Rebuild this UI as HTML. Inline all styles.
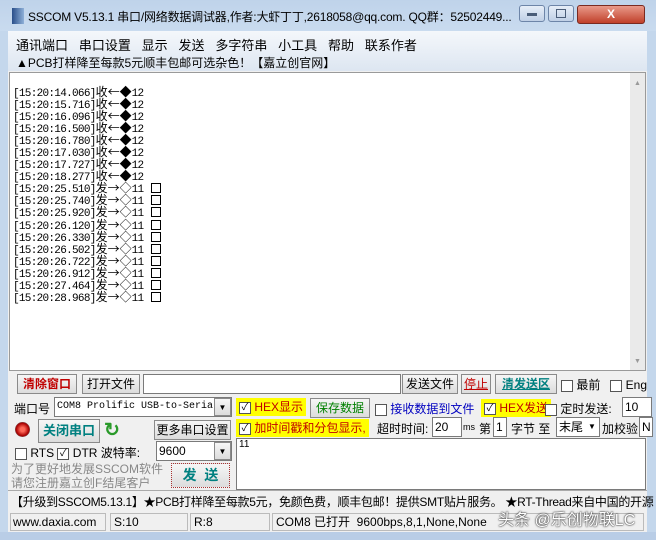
<!DOCTYPE html>
<html><head><meta charset="utf-8"><style>
*{margin:0;padding:0;box-sizing:border-box}
body{width:656px;height:540px;overflow:hidden;background:#c4d7ec;font-family:"Liberation Sans","Noto Sans CJK SC",sans-serif;font-size:12px;color:#000;position:relative}
.a{position:absolute;white-space:nowrap}
.btn{position:absolute;background:linear-gradient(#f6f6f6,#dcdcdc);border:1px solid #8a8a8a;text-align:center;line-height:18px;font-size:12px}
.cb{display:inline-block;width:12px;height:12px;border:1px solid #555;background:#fff;vertical-align:middle;font-size:10px;line-height:10px;text-align:center}
.inp{position:absolute;background:#fff;border:1px solid #7a7a7a;font-size:12px;line-height:18px;padding-left:2px}
.mono{font-family:"Liberation Mono","Noto Sans CJK SC",monospace}
.log div{height:12.05px;line-height:12px;overflow:visible;letter-spacing:-0.7px}
.w{display:inline-block;width:12px;line-height:12px;text-align:center;font-size:12px;letter-spacing:0;font-family:"Noto Sans CJK SC",sans-serif}
.s{display:inline-block;width:10px;height:10px;border:1px solid #000;margin-left:8px;vertical-align:-1px}
</style></head><body>
<div class="a" style="left:0;top:0;width:656px;height:31px;background:linear-gradient(#bfd3ea,#c9dbef)"></div>
<div class="a" style="left:12px;top:8px;width:12px;height:16px;background:linear-gradient(90deg,#2a4f8a,#8fb0d8)"></div>
<div class="a" style="left:28px;top:8px;font-size:12px;letter-spacing:-0.2px;color:#000">SSCOM V5.13.1 串口/网络数据调试器,作者:大虾丁丁,2618058@qq.com. QQ群：52502449...</div>
<div class="a" style="left:519px;top:5px;width:26px;height:17px;border:1px solid #6d85a8;border-radius:3px;background:linear-gradient(#e6eef8,#c0d0e6)"></div>
<div class="a" style="left:548px;top:5px;width:26px;height:17px;border:1px solid #6d85a8;border-radius:3px;background:linear-gradient(#e6eef8,#c0d0e6)"></div>
<div class="a" style="left:577px;top:5px;width:68px;height:19px;border:1px solid #7a2a20;border-radius:3px;background:linear-gradient(#e99a8a,#c0402a);color:#fff;font-weight:bold;text-align:center;line-height:17px">X</div>
<div class="a" style="left:527px;top:13px;width:10px;height:3px;background:#4a5d78"></div>
<div class="a" style="left:556px;top:9px;width:10px;height:9px;border:1px solid #4a5d78"></div>
<div class="a" style="left:8px;top:31px;width:639px;height:500px;background:#f0f0f0"></div>
<div class="a" style="left:8px;top:31px;width:639px;height:40px;background:linear-gradient(#f4f7fb,#dde6f1)"></div>
<div class="a" style="left:16px;top:35px;font-size:13px">通讯端口&nbsp;&nbsp;&nbsp;串口设置&nbsp;&nbsp;&nbsp;显示&nbsp;&nbsp;&nbsp;发送&nbsp;&nbsp;&nbsp;多字符串&nbsp;&nbsp;&nbsp;小工具&nbsp;&nbsp;&nbsp;帮助&nbsp;&nbsp;&nbsp;联系作者</div>
<div class="a" style="left:16px;top:54px;font-size:12px">▲PCB打样降至每款5元顺丰包邮可选杂色！【嘉立创官网】</div>
<div class="a" style="left:9px;top:72px;width:637px;height:299px;background:#fff;border:1px solid #9a9a9a"></div>
<div class="a" style="left:630px;top:73px;width:15px;height:297px;background:#eaeaea"></div>
<div class="a" style="left:634px;top:80px;font-size:7px;color:#999">▲</div>
<div class="a" style="left:634px;top:358px;font-size:7px;color:#999">▼</div>
<div class="a mono log" style="left:13px;top:86px;font-size:11px">
<div>[15:20:14.066]<span class="w">收</span><span class="w">←</span><span class="w">◆</span>12</div>
<div>[15:20:15.716]<span class="w">收</span><span class="w">←</span><span class="w">◆</span>12</div>
<div>[15:20:16.096]<span class="w">收</span><span class="w">←</span><span class="w">◆</span>12</div>
<div>[15:20:16.500]<span class="w">收</span><span class="w">←</span><span class="w">◆</span>12</div>
<div>[15:20:16.780]<span class="w">收</span><span class="w">←</span><span class="w">◆</span>12</div>
<div>[15:20:17.030]<span class="w">收</span><span class="w">←</span><span class="w">◆</span>12</div>
<div>[15:20:17.727]<span class="w">收</span><span class="w">←</span><span class="w">◆</span>12</div>
<div>[15:20:18.277]<span class="w">收</span><span class="w">←</span><span class="w">◆</span>12</div>
<div>[15:20:25.510]<span class="w">发</span><span class="w">→</span><span class="w">◇</span>11<span class="s"></span></div>
<div>[15:20:25.740]<span class="w">发</span><span class="w">→</span><span class="w">◇</span>11<span class="s"></span></div>
<div>[15:20:25.920]<span class="w">发</span><span class="w">→</span><span class="w">◇</span>11<span class="s"></span></div>
<div>[15:20:26.120]<span class="w">发</span><span class="w">→</span><span class="w">◇</span>11<span class="s"></span></div>
<div>[15:20:26.330]<span class="w">发</span><span class="w">→</span><span class="w">◇</span>11<span class="s"></span></div>
<div>[15:20:26.502]<span class="w">发</span><span class="w">→</span><span class="w">◇</span>11<span class="s"></span></div>
<div>[15:20:26.722]<span class="w">发</span><span class="w">→</span><span class="w">◇</span>11<span class="s"></span></div>
<div>[15:20:26.912]<span class="w">发</span><span class="w">→</span><span class="w">◇</span>11<span class="s"></span></div>
<div>[15:20:27.464]<span class="w">发</span><span class="w">→</span><span class="w">◇</span>11<span class="s"></span></div>
<div>[15:20:28.968]<span class="w">发</span><span class="w">→</span><span class="w">◇</span>11<span class="s"></span></div>
</div>
<div class="btn" style="left:17px;top:374px;width:60px;height:20px;color:#c00000;font-weight:bold">清除窗口</div>
<div class="btn" style="left:82px;top:374px;width:58px;height:20px">打开文件</div>
<div class="inp" style="left:143px;top:374px;width:258px;height:20px"></div>
<div class="btn" style="left:402px;top:374px;width:56px;height:20px">发送文件</div>
<div class="btn" style="left:461px;top:374px;width:30px;height:20px;color:#c00000;text-decoration:underline">停止</div>
<div class="btn" style="left:495px;top:374px;width:62px;height:20px;color:#008080;font-weight:bold;text-decoration:underline">清发送区</div>
<div class="a" style="left:561px;top:376px"><span class="cb"></span> 最前&nbsp;&nbsp;&nbsp;<span class="cb"></span> Eng</div>
<div class="a" style="left:14px;top:400px;font-size:12px">端口号</div>
<div class="inp mono" style="left:54px;top:397px;width:178px;height:20px;font-size:10px;line-height:18px">COM8 Prolific USB-to-Seria</div>
<div class="btn" style="left:214px;top:398px;width:17px;height:18px;font-size:8px">▼</div>
<div class="a" style="left:15px;top:422px;width:15px;height:15px;border-radius:50%;background:radial-gradient(circle,#ff6a5a 20%,#a00 60%,#666 75%)"></div>
<div class="btn" style="left:38px;top:419px;width:62px;height:24px;line-height:22px;color:#008080;font-weight:bold;font-size:13px">关闭串口</div>
<div class="a" style="left:104px;top:419px;font-size:19px;color:#2a9a2a;font-weight:bold">↻</div>
<div class="btn" style="left:154px;top:420px;width:77px;height:20px">更多串口设置</div>
<div class="a" style="left:15px;top:444px"><span class="cb"></span> RTS <span class="cb">✓</span> DTR 波特率:</div>
<div class="inp" style="left:156px;top:441px;width:76px;height:20px">9600</div>
<div class="btn" style="left:214px;top:442px;width:17px;height:18px;font-size:8px">▼</div>
<div class="a" style="left:11px;top:462px;color:#888;line-height:14px">为了更好地发展SSCOM软件<br>请您注册嘉立创F结尾客户</div>
<div class="btn" style="left:171px;top:463px;width:59px;height:25px;line-height:23px;color:#008080;font-weight:bold;font-size:14px;border:1px dotted #a33">发&nbsp;&nbsp;送</div>
<div class="a" style="left:236px;top:398px;background:#ffff00;padding:1px 3px;line-height:16px"><span class="cb">✓</span> <span style="color:#c00000">HEX显示</span></div>
<div class="btn" style="left:310px;top:398px;width:60px;height:20px;color:#008000">保存数据</div>
<div class="a" style="left:375px;top:400px"><span class="cb"></span> <span style="color:#0000c0">接收数据到文件</span></div>
<div class="a" style="left:481px;top:399px;background:#ffff00;padding:1px 3px;line-height:16px"><span class="cb">✓</span> <span style="color:#c00000">HEX发送</span></div>
<div class="a" style="left:545px;top:400px"><span class="cb"></span> 定时发送:</div>
<div class="inp" style="left:622px;top:397px;width:30px;height:20px">10</div>
<div class="a" style="left:236px;top:419px;background:#ffff00;padding:1px 3px;line-height:16px"><span class="cb">✓</span> <span style="color:#c00000">加时间戳和分包显示,</span></div>
<div class="a" style="left:377px;top:420px">超时时间:</div>
<div class="inp" style="left:432px;top:417px;width:30px;height:20px">20</div>
<div class="a" style="left:463px;top:422px;font-size:9px">ms</div>
<div class="a" style="left:479px;top:420px">第</div>
<div class="inp" style="left:493px;top:417px;width:14px;height:20px">1</div>
<div class="a" style="left:511px;top:420px">字节 至</div>
<div class="inp" style="left:556px;top:417px;width:44px;height:20px">末尾</div>
<div class="a" style="left:588px;top:422px;font-size:8px">▼</div>
<div class="a" style="left:602px;top:420px">加校验</div>
<div class="inp" style="left:639px;top:417px;width:14px;height:20px">N</div>
<div class="inp" style="left:236px;top:438px;width:410px;height:52px;line-height:12px;font-size:10px">11</div>
<div class="a" style="left:8px;top:490px;width:639px;height:21px;background:#f0f0f0;border-top:1px solid #aaa"></div>
<div class="a" style="left:11px;top:493px;font-size:12px;letter-spacing:-0.3px">【升级到SSCOM5.13.1】★PCB打样降至每款5元，免颜色费，顺丰包邮！提供SMT贴片服务。 ★RT-Thread来自中国的开源</div>
<div class="a" style="left:8px;top:512px;width:639px;height:20px;background:#f0f0f0"></div>
<div class="a" style="left:10px;top:513px;width:96px;height:18px;border:1px solid #bbb;padding-left:2px;line-height:16px">www.daxia.com</div>
<div class="a" style="left:110px;top:513px;width:78px;height:18px;border:1px solid #bbb;padding-left:3px;line-height:16px">S:10</div>
<div class="a" style="left:190px;top:513px;width:80px;height:18px;border:1px solid #bbb;padding-left:3px;line-height:16px">R:8</div>
<div class="a" style="left:272px;top:513px;width:372px;height:18px;border:1px solid #bbb;padding-left:3px;line-height:16px">COM8 已打开&nbsp; 9600bps,8,1,None,None</div>
<div class="a" style="left:498px;top:506px;font-size:16px;color:#fff;text-shadow:0 0 2px #333,0 0 1px #000">头条 @乐创物联LC</div>
<div class="a" style="left:0;top:532px;width:656px;height:8px;background:#b9cde6"></div>
</body></html>
